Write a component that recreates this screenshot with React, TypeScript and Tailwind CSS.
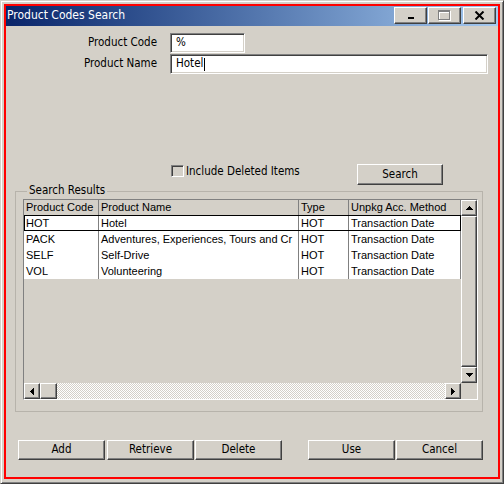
import React from "react";

const UI = "font-[family-name:'DejaVu_Sans_Condensed','DejaVu_Sans','Liberation_Sans',sans-serif] font-stretch-condensed";
const ARIAL = "font-[family-name:'Liberation_Sans',Arial,sans-serif]";
const RAISED =
  "border border-t-white border-l-white border-r-[#404040] border-b-[#404040] shadow-[inset_-1px_-1px_0_#808080] bg-[#d4d0c8]";
const SUNKEN =
  "border border-t-[#808080] border-l-[#808080] border-r-white border-b-white shadow-[inset_1px_1px_0_#404040,inset_-1px_-1px_0_#d4d0c8]";

function Arrow({ dir }: { dir: "up" | "down" | "left" | "right" }) {
  if (dir === "up")
    return (
      <svg width="7" height="4" viewBox="0 0 7 4" shapeRendering="crispEdges">
        <polygon points="3.5,0 7,4 0,4" fill="#000" />
      </svg>
    );
  if (dir === "down")
    return (
      <svg width="7" height="4" viewBox="0 0 7 4" shapeRendering="crispEdges">
        <polygon points="0,0 7,0 3.5,4" fill="#000" />
      </svg>
    );
  if (dir === "left")
    return (
      <svg width="4" height="7" viewBox="0 0 4 7" shapeRendering="crispEdges">
        <polygon points="4,0 4,7 0,3.5" fill="#000" />
      </svg>
    );
  return (
    <svg width="4" height="7" viewBox="0 0 4 7" shapeRendering="crispEdges">
      <polygon points="0,0 4,3.5 0,7" fill="#000" />
    </svg>
  );
}

const cols = [
  { w: "w-[75px]", h: "Product Code" },
  { w: "w-[200px]", h: "Product Name" },
  { w: "w-[50px]", h: "Type" },
  { w: "w-[112px]", h: "Unpkg Acc. Method" },
];

const rows = [
  ["HOT", "Hotel", "HOT", "Transaction Date"],
  ["PACK", "Adventures, Experiences, Tours and Cr", "HOT", "Transaction Date"],
  ["SELF", "Self-Drive", "HOT", "Transaction Date"],
  ["VOL", "Volunteering", "HOT", "Transaction Date"],
];

function Button({ label, className }: { label: string; className: string }) {
  return (
    <div className={`${RAISED} ${UI} h-[20px] text-[11.5px] text-black flex items-center justify-center ${className}`}>
      {label}
    </div>
  );
}

export default function App() {
  return (
    <div className="w-[504px] h-[484px] bg-[#d4d0c8] border border-t-[#d4d0c8] border-l-[#d4d0c8] border-r-[#404040] border-b-[#404040] shadow-[inset_1px_1px_0_#ffffff,inset_-1px_-1px_0_#808080] pt-[3px] px-[3px] pb-[4px]">
      <div className="w-full h-full border-2 border-[#ff0000] flex flex-col">
        {/* Title bar */}
        <div className="h-[20px] flex items-start pt-[1px] pl-[1px] pr-[2px] bg-linear-to-r from-[#0a246a] to-[#a6caf0]">
          <div className={`${UI} flex-1 text-white text-[12px] leading-[17px]`}>Product Codes Search</div>
          <div className={`${RAISED} w-[33px] h-[17px] flex justify-center pt-[9px]`}>
            <div className="w-[6px] h-[2px] bg-black" />
          </div>
          <div className={`${RAISED} ml-[1px] w-[33px] h-[17px] flex items-center justify-center`}>
            <svg width="13" height="11" viewBox="0 0 13 11" shapeRendering="crispEdges">
              <rect x="1.5" y="1.5" width="11" height="9" fill="none" stroke="#ffffff" />
              <rect x="1" y="2" width="11" height="1" fill="#ffffff" />
              <rect x="0.5" y="0.5" width="11" height="9" fill="none" stroke="#808080" />
              <rect x="0" y="1" width="12" height="1" fill="#808080" />
            </svg>
          </div>
          <div className={`${RAISED} ml-[2px] w-[33px] h-[17px] flex items-center justify-center`}>
            <svg width="11" height="9" viewBox="0 0 11 9">
              <path d="M1.5 0.5 L9.5 8.5 M9.5 0.5 L1.5 8.5" stroke="#000" strokeWidth="2" />
            </svg>
          </div>
        </div>

        {/* Content */}
        <div className={`${UI} flex-1 flex flex-col text-[11.5px] text-black`}>
          <div className="mt-[7px] h-[20px] flex items-center">
            <div className="w-[151px] text-right">Product Code</div>
            <div className={`${SUNKEN} ml-[13px] w-[75px] h-[20px] bg-white flex items-center pl-[5px]`}>%</div>
          </div>
          <div className="mt-[1px] h-[20px] flex items-center">
            <div className="w-[151px] text-right">Product Name</div>
            <div className={`${SUNKEN} ml-[13px] w-[318px] h-[20px] bg-white flex items-center pl-[5px]`}>
              Hotel
              <span className="ml-[1px] w-[1px] h-[13px] bg-black" />
            </div>
          </div>

          <div className="mt-[90px] h-[21px] flex items-start">
            <div className={`${SUNKEN} ml-[165px] mt-[1px] w-[13px] h-[12px] bg-[#d4d0c8]`} />
            <div className="ml-[2px] mt-[1px] leading-[13px]">Include Deleted Items</div>
            <div className={`${RAISED} ml-auto mr-[55px] w-[86px] h-[21px] flex items-center justify-center shadow-[inset_-1px_-1px_0_#606060]`}>
              Search
            </div>
          </div>

          {/* Group box */}
          <div className="relative mt-[6px] ml-[9px] w-[468px] h-[221px] border border-[#b7b3ab] pt-[7px] pl-[7px]">
            <div className="absolute -top-[8px] left-[11px] px-[2px] bg-[#d4d0c8] leading-[13px]">Search Results</div>

            <div className={`${ARIAL} w-[455px] h-[201px] border border-t-[#808080] border-l-[#808080] border-r-white border-b-white grid grid-cols-[437px_16px] grid-rows-[183px_16px] bg-[#d4d0c8] text-[11px] text-black`}>
              <div className="flex flex-col overflow-hidden">
                <div className="h-[15px] flex">
                  {cols.map((c) => (
                    <div key={c.h} className={`${c.w} h-[15px] border-r border-[#808080] pl-[2px] leading-[15px] whitespace-nowrap overflow-hidden`}>
                      {c.h}
                    </div>
                  ))}
                </div>
                {rows.map((r, i) => (
                  <div
                    key={r[0]}
                    className={`h-[16px] flex bg-white ${i === 0 ? "outline outline-black -outline-offset-1" : ""}`}
                  >
                    {r.map((cell, j) => (
                      <div key={j} className={`${cols[j].w} h-[16px] border-r border-[#808080] pl-[2px] leading-[16px] whitespace-nowrap overflow-hidden`}>
                        {cell}
                      </div>
                    ))}
                  </div>
                ))}
              </div>

              <div className="flex flex-col">
                <div className={`${RAISED} h-[16px] flex items-center justify-center`}>
                  <Arrow dir="up" />
                </div>
                <div className={`${RAISED} flex-1`} />
                <div className={`${RAISED} h-[16px] flex items-center justify-center`}>
                  <Arrow dir="down" />
                </div>
              </div>

              <div className="flex">
                <div className={`${RAISED} w-[16px] h-[16px] flex items-center justify-center`}>
                  <Arrow dir="left" />
                </div>
                <div className={`${RAISED} w-[17px] h-[16px]`} />
                <div className="flex-1 h-[16px] bg-[repeating-conic-gradient(#ffffff_0%_25%,#d4d0c8_0%_50%)] bg-[length:2px_2px]" />
                <div className={`${RAISED} w-[16px] h-[16px] flex items-center justify-center`}>
                  <Arrow dir="right" />
                </div>
              </div>
              <div className="bg-[#d4d0c8]" />
            </div>
          </div>

          <div className="mt-[28px] flex">
            <Button label="Add" className="ml-[12px] w-[87px]" />
            <Button label="Retrieve" className="ml-[2px] w-[87px]" />
            <Button label="Delete" className="ml-[1px] w-[87px]" />
            <Button label="Use" className="ml-[26px] w-[87px]" />
            <Button label="Cancel" className="ml-[1px] w-[87px]" />
          </div>
        </div>
      </div>
    </div>
  );
}
